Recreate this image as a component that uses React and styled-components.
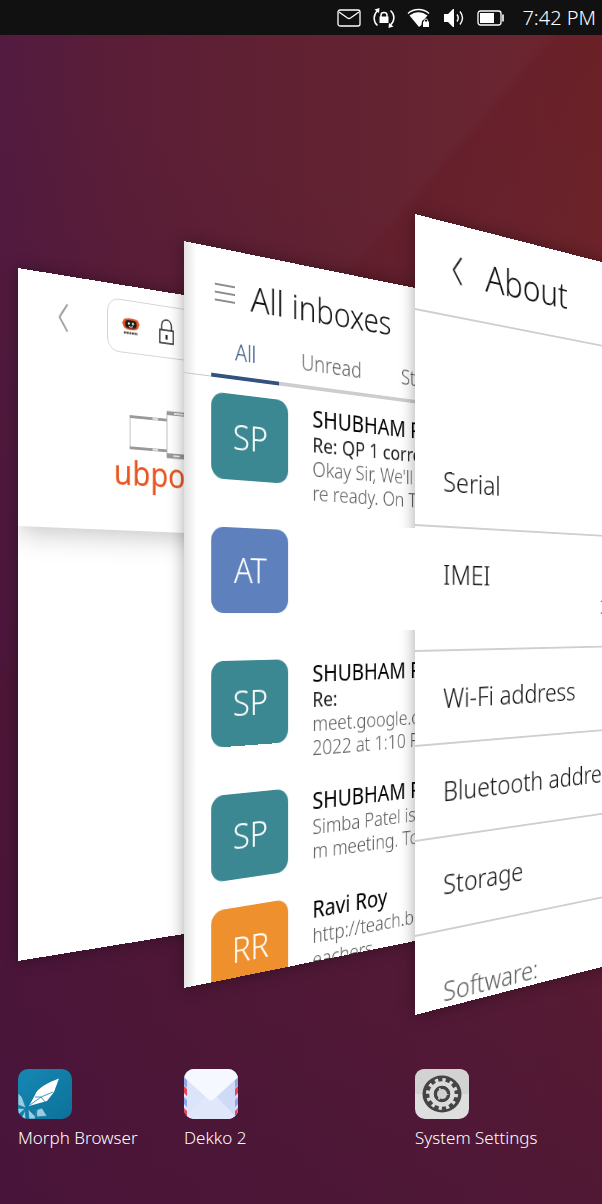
import React from 'react';
import styled, { createGlobalStyle, css } from 'styled-components';

const Global = createGlobalStyle`
  * { box-sizing: border-box; }
  html, body { margin: 0; padding: 0; background: #4a163a; }
  body { font-family: "Noto Sans", "Open Sans", sans-serif; font-weight: 300; color: #111; }
  button { font: inherit; color: inherit; border: 0; padding: 0; background: none; cursor: pointer; }
  h1, h2, p, ul, dl, dd, dt { margin: 0; padding: 0; font-weight: inherit; }
  ul { list-style: none; }
  svg { display: block; flex: none; }
`;

const Desktop = styled.main`
  min-height: 100vh;
  display: flex;
  flex-direction: column;
  overflow: hidden;
  background:
    linear-gradient(200deg, transparent 20%, rgba(70, 19, 56, 0.5) 60%, rgba(70, 19, 56, 0.85) 100%),
    linear-gradient(131deg, transparent 35%, rgba(96, 16, 24, 0.22) 36%, transparent 55%),
    linear-gradient(to right, #531b40, #5b1e37 20%, #622231 55%, #692531 82%, #6d242a);
`;

const StatusBar = styled.header`
  height: 35px;
  flex: none;
  display: flex;
  align-items: center;
  justify-content: flex-end;
  gap: 12px;
  padding-right: 6px;
  background: #111;
  color: #fff;
`;

const Clock = styled.time`
  font-size: 20px;
  line-height: 35px;
  margin-left: 6px;
`;

const Spread = styled.div`
  flex: 1;
  display: grid;
  grid-template-columns: 166fr 231fr 187fr;
  grid-template-rows: 1034px auto;
  padding-left: 18px;
  padding-bottom: 48px;
`;

const Slot = styled.section`
  position: relative;
  min-width: 0;
  grid-row: 1;
  grid-column: ${p => p.$column};
  display: flex;
  align-items: center;
  padding-top: 125px;
`;

const Window = styled.article`
  flex: none;
  width: 440px;
  height: ${p => p.$height}px;
  overflow: hidden;
  background: #fff;
  transform-origin: left center;
  transform: perspective(${p => p.$depth}px) rotateY(23deg);
`;

const Shade = styled.div`
  flex: none;
  display: flex;
  filter: drop-shadow(0 0 8px rgba(0, 0, 0, 0.35));
`;

const Redacted = styled.div`
  position: absolute;
  z-index: 1;
  right: 0;
  top: 493px;
  width: 112px;
  height: 102px;
  background: #fff;
`;

const Launcher = styled.button`
  grid-row: 2;
  grid-column: ${p => p.$column};
  display: flex;
  flex-direction: column;
  align-items: flex-start;
  gap: 6px;
  color: #fff;
  font-size: 17px;
  line-height: 26px;
  white-space: nowrap;
`;

/* Browser window */

const BrowserHead = styled.div`
  height: 258px;
  background: #fff;
  box-shadow: 0 4px 28px rgba(0, 0, 0, 0.25);
`;

const AddressRow = styled.div`
  display: flex;
  align-items: center;
  padding: 15px 16px 0 45px;
`;

const AddressBox = styled.div`
  flex: 1;
  height: 56px;
  margin-left: 45px;
  padding: 0 17px;
  display: flex;
  align-items: center;
  gap: 24px;
  border: 1px solid #d4d4d4;
  border-radius: 14px;
`;

const SiteLogo = styled.div`
  padding: 56px 0 0 109px;
  color: #e95420;
  font-size: 36px;
  line-height: 36px;
  font-weight: 400;
  svg { margin-left: 19px; }
`;

/* Mail window */

const MailWindow = styled(Window)`
  background: linear-gradient(to right, #e2e2e2, #fff 14px);
`;

const TitleRow = styled.div`
  display: flex;
  align-items: center;
  height: ${p => p.$height}px;
  padding-left: ${p => p.$inset}px;
  gap: ${p => p.$gap}px;
`;

const Title = styled.h1`
  font-size: ${p => p.$size}px;
  line-height: 48px;
  white-space: nowrap;
`;

const Tabs = styled.nav`
  display: flex;
  height: 42px;
  padding-left: 30px;
  background: linear-gradient(#c9c9c9, #c9c9c9) 0 100% / 100% 1px no-repeat;
`;

const Tab = styled.button`
  padding: 0 27px 12px;
  font-size: 23px;
  line-height: 26px;
  color: #5d5d5d;
  border-bottom: 4px solid #cdcdcd;
  &:last-child { flex: 1; text-align: left; }
  ${p => p.$active && css`
    color: #335280;
    border-color: #335280;
  `}
`;

const MailList = styled.ul`
  display: grid;
  gap: 29px;
  padding: 15px 0 0 30px;
`;

const MailRow = styled.li`
  display: flex;
  gap: 30px;
`;

const Avatar = styled.div`
  flex: none;
  width: 90px;
  height: 88px;
  border-radius: 14px;
  background: ${p => p.$color};
  color: #fff;
  font-size: 36px;
  line-height: 88px;
  text-align: center;
`;

const MailText = styled.div`
  min-height: ${p => (p.$tall ? 108 : 0)}px;
  white-space: nowrap;
  font-size: 22px;
  line-height: 26px;
  color: #5d5d5d;
`;

const Sender = styled.h2`
  font-size: 25px;
  line-height: 30px;
  font-weight: 400;
  color: #000;
`;

const Subject = styled.p`
  color: #222;
  font-weight: 400;
`;

/* Settings window */

const SettingsHead = styled.header`
  border-bottom: 2px solid #cfcfcf;
  margin-bottom: 121px;
`;

const Setting = styled.div`
  display: grid;
  grid-template-columns: 197px 1fr;
  align-content: start;
  height: ${p => (p.$tall ? 126 : 95)}px;
  padding: 30px 0 0 31px;
  border-bottom: 2px solid #cfcfcf;
  font-size: 27px;
  line-height: 36px;
  white-space: nowrap;
`;

const SettingValue = styled.dd`
  grid-column: 2;
  grid-row: 2;
  font-size: 22px;
  line-height: 26px;
  color: #333;
`;

const GroupLabel = styled.p`
  padding: 44px 0 0 31px;
  font-size: 27px;
  line-height: 36px;
  color: #5d5d5d;
`;

const IconButton = styled.button`
  display: flex;
  color: ${p => p.$color};
`;

const Chevron = () => (
  <svg width="11" height="30" viewBox="0 0 11 30" fill="none" stroke="currentColor" strokeWidth="2">
    <path d="M10 1 1 15l9 14" />
  </svg>
);

const Menu = () => (
  <svg width="23" height="20" viewBox="0 0 23 20" stroke="currentColor" strokeWidth="1.3">
    <path d="M0 2h23M0 10h23M0 18h23" />
  </svg>
);

const Padlock = () => (
  <svg width="19" height="28" viewBox="0 0 19 28" fill="none" stroke="#222" strokeWidth="1.5">
    <path d="M1 12h17v14H1zM3.500 12V7c0-8 12-8 12 0v5" />
    <path d="M9.500 17v5" strokeWidth="2.400" />
  </svg>
);

const Favicon = () => (
  <svg width="21" height="18" viewBox="0 0 21 18">
    <path d="M2 1.500c3-2 14-2 17 0l2 4-2 4.500c-3 3-14 3-17 0L0 5.500z" fill="#e95420" />
    <rect x="3.500" y="2" width="14" height="8.500" rx="4" fill="#1c1c1c" />
    <circle cx="8" cy="5.500" r="1.200" fill="#fff" />
    <circle cx="13" cy="5.500" r="1.200" fill="#fff" />
    <path d="M8 8.500q2.500 1.500 5 0" stroke="#fff" fill="none" />
    <path d="M2 15.500h17" stroke="#333" strokeWidth="2" strokeDasharray="2.500 .8" />
  </svg>
);

const Devices = () => (
  <svg width="120" height="52" viewBox="0 0 120 52" fill="#fff" stroke="#b5b5b5">
    <path d="M.5 9.500h46v35H.5z" />
    <path d="M0 9h46v3H0zM0 42h46v3H0z" fill="#999" stroke="none" />
    <path d="M46 1h34v50H46z" />
    <path d="M46 1h34v4H46zM46 46h34v5H46z" fill="#999" stroke="none" />
    <path d="M28 10.500h7M28 43.500h7M55 3h12M54 48.500h8" stroke="#fff" strokeWidth="1.500" />
  </svg>
);

const MailStatus = () => (
  <svg width="24" height="18" viewBox="0 0 24 18" fill="none" stroke="#fff" strokeWidth="1.300">
    <rect x="1" y="1" width="22" height="16" rx="2" />
    <path d="m2 3 8.500 6q1.500 1 3 0L22 3" />
  </svg>
);

const RotationStatus = () => (
  <svg width="22" height="20" viewBox="0 0 22 20" fill="none" stroke="#fff" strokeWidth="1.500">
    <path d="M4.500 17.500C0 13.500 0 7 4.500 2.800M17.500 2.500c4.500 4 4.500 10.500 0 14.500" />
    <path d="M1.500 1.500 6.500 0l-.5 5zM20.500 18.500 15.500 20l.5-5z" fill="#fff" stroke="none" />
    <path d="M8 9V7c0-3.500 6-3.500 6 0v2" />
    <path d="M6.500 8.500h9V15h-9z" fill="#fff" stroke="none" />
  </svg>
);

const WifiStatus = () => (
  <svg width="24" height="20" viewBox="0 0 24 20" fill="#fff">
    <path d="M1 5.500C7 .3 16 .3 22 5.500" fill="none" stroke="#fff" strokeWidth="1.500" />
    <path d="M2.500 7.500c5.500-4.500 12.500-4.500 18 0L17 11.500l-2 1.500-.5 4L12 19z" />
    <path d="M16 13.500h6V19h-6z" />
    <path d="M17.500 14v-1.500c0-2 3-2 3 0V14" fill="none" stroke="#fff" />
  </svg>
);

const VolumeStatus = () => (
  <svg width="22" height="20" viewBox="0 0 22 20" fill="#fff">
    <path d="M1 6h4l5-5h1v18h-1l-5-5H1z" />
    <path d="M14 6.500q2.500 3.500 0 7M17 3.500q5 6.500 0 13" fill="none" stroke="#fff" strokeWidth="1.400" />
  </svg>
);

const BatteryStatus = () => (
  <svg width="27" height="16" viewBox="0 0 27 16" fill="none" stroke="#fff" strokeWidth="1.300">
    <rect x="1" y="1" width="23" height="14" rx="2.500" />
    <path d="M3 3h14v10H3z" fill="#fff" stroke="none" />
    <path d="M26 4.500v7" strokeWidth="1.600" />
  </svg>
);

const MorphIcon = () => (
  <svg width="54" height="50" viewBox="0 0 54 50">
    <defs>
      <linearGradient id="morph" x1="0" y1="0" x2="1" y2="1">
        <stop offset="0" stopColor="#1688b3" />
        <stop offset="1" stopColor="#0d7199" />
      </linearGradient>
      <clipPath id="tile"><rect width="54" height="50" rx="10" /></clipPath>
    </defs>
    <g clipPath="url(#tile)">
      <rect width="54" height="50" fill="url(#morph)" />
      <path d="M41 9.500C31 13 19 19 17 26l-6 11 18-5 7-9z" fill="#fff" />
      <path d="m12 36 11-8 12-5M17 28l6 0 4 5" fill="none" stroke="#1680a8" strokeWidth=".8" />
      <g fill="#9ecbe0" stroke="#1680a8" strokeWidth=".8">
        <path d="m0 24 4 4 4 11-8-3zM0 39l7 1-7 6zM3 50l4-9 1 9zM10 40l8 1-1 9h-6zM18 41l6-2 5 8-10 1zM10 40l8 8 1-7z" />
      </g>
    </g>
  </svg>
);

const DekkoIcon = () => (
  <svg width="54" height="50" viewBox="0 0 54 50">
    <clipPath id="envelope"><rect width="54" height="50" rx="10" /></clipPath>
    <g clipPath="url(#envelope)">
      <rect width="54" height="50" fill="#dce4fa" />
      <path d="M54 6v44H38L27 31z" fill="#cfdaf7" />
      <path d="M0 50 22 27l5 4 5-4 22 23z" fill="#e0e7fb" />
      <path d="M0 8 3 11v8L0 16zM54 8l-3 3v8l3-3zM0 28l3 3v7l-3-3zM54 28l-3 3v7l3-3z" fill="#8ba6ea" />
      <path d="m0 17 3 3v7l-3-3zM54 17l-3 3v7l3-3zM0 39l3 3v8H0zM54 39l-3 3v8h3z" fill="#ee3f55" />
      <path d="M0 0h54v8L29 31q-2 1.500-4 0L0 8z" fill="#f5f8ff" />
    </g>
  </svg>
);

const GearIcon = () => (
  <svg width="54" height="50" viewBox="0 0 54 50">
    <rect width="54" height="50" rx="10" fill="#dedede" />
    <path d="M0 25V10Q0 0 10 0h34q10 0 10 10v15z" fill="#d2d2d2" />
    <ellipse cx="27" cy="25" rx="19.500" ry="18.500" fill="#444" />
    <circle cx="27" cy="25" r="14" fill="none" stroke="#dadada" strokeWidth="4" strokeDasharray="3.200 4.130" />
    <circle cx="27" cy="25" r="10.500" fill="none" stroke="#dadada" strokeWidth="4.500" />
    <circle cx="27" cy="25" r="6.500" fill="#d0d0d0" stroke="#444" strokeWidth="3" strokeDasharray="11.600 2" strokeDashoffset="-1" />
  </svg>
);

const MAILS = [
  { initials: 'SP', color: '#3b8892', sender: 'SHUBHAM PATEL', subject: 'Re: QP 1 correction', lines: ["Okay Sir, We'll", 're ready. On Tue'] },
  { initials: 'AT', color: '#5e80bd' },
  { initials: 'SP', color: '#3b8892', sender: 'SHUBHAM PATEL', subject: 'Re:', lines: ['meet.google.com', '2022 at 1:10 PM'] },
  { initials: 'SP', color: '#3b8892', sender: 'SHUBHAM PATEL', lines: ['Simba Patel is in', 'm meeting. To'] },
  { initials: 'RR', color: '#ee902e', sender: 'Ravi Roy', lines: ['http://teach.b', 'eachers'] },
];

const SETTINGS = [
  { name: 'Serial' },
  { name: 'IMEI', value: '3' },
  { name: 'Wi-Fi address' },
  { name: 'Bluetooth address' },
  { name: 'Storage' },
];

export default function App() {
  return (
    <>
      <Global />
      <Desktop>
        <StatusBar>
          <MailStatus />
          <RotationStatus />
          <WifiStatus />
          <VolumeStatus />
          <BatteryStatus />
          <Clock>7:42 PM</Clock>
        </StatusBar>
        <Spread>
          <Slot $column={1}>
            <Shade>
              <Window $height={693} $depth={903}>
                <BrowserHead>
                  <AddressRow>
                    <IconButton $color="#999" aria-label="Back"><Chevron /></IconButton>
                    <AddressBox>
                      <Favicon />
                      <Padlock />
                    </AddressBox>
                  </AddressRow>
                  <SiteLogo>
                    <Devices />
                    ubports
                  </SiteLogo>
                </BrowserHead>
              </Window>
            </Shade>
          </Slot>
          <Slot $column={2}>
            <Shade>
              <MailWindow $height={747} $depth={779}>
                <TitleRow $height={90} $inset={34} $gap={18}>
                  <IconButton $color="#666" aria-label="Menu"><Menu /></IconButton>
                  <Title $size={37}>All inboxes</Title>
                </TitleRow>
                <Tabs>
                  <Tab $active>All</Tab>
                  <Tab>Unread</Tab>
                  <Tab>Starred</Tab>
                </Tabs>
                <MailList>
                  {MAILS.map((mail, i) => (
                    <MailRow key={i}>
                      <Avatar $color={mail.color}>{mail.initials}</Avatar>
                      <MailText $tall={!mail.sender}>
                        {mail.sender && <Sender>{mail.sender}</Sender>}
                        {mail.subject && <Subject>{mail.subject}</Subject>}
                        {mail.lines && mail.lines.map(line => <p key={line}>{line}</p>)}
                      </MailText>
                    </MailRow>
                  ))}
                </MailList>
              </MailWindow>
            </Shade>
          </Slot>
          <Slot $column={3}>
            <Shade>
              <Window $height={801} $depth={661}>
                <SettingsHead>
                  <TitleRow $height={94} $inset={42} $gap={27}>
                    <IconButton $color="#222" aria-label="Back"><Chevron /></IconButton>
                    <Title $size={38}>About</Title>
                  </TitleRow>
                </SettingsHead>
                <dl>
                  {SETTINGS.map(item => (
                    <Setting key={item.name} $tall={!!item.value}>
                      <dt>{item.name}</dt>
                      {item.value && <SettingValue>{item.value}</SettingValue>}
                    </Setting>
                  ))}
                </dl>
                <GroupLabel>Software:</GroupLabel>
              </Window>
            </Shade>
          </Slot>
          <Slot $column={2} as="div">
            <Redacted />
          </Slot>
          <Launcher $column={1}><MorphIcon />Morph Browser</Launcher>
          <Launcher $column={2}><DekkoIcon />Dekko 2</Launcher>
          <Launcher $column={3}><GearIcon />System Settings</Launcher>
        </Spread>
      </Desktop>
    </>
  );
}
